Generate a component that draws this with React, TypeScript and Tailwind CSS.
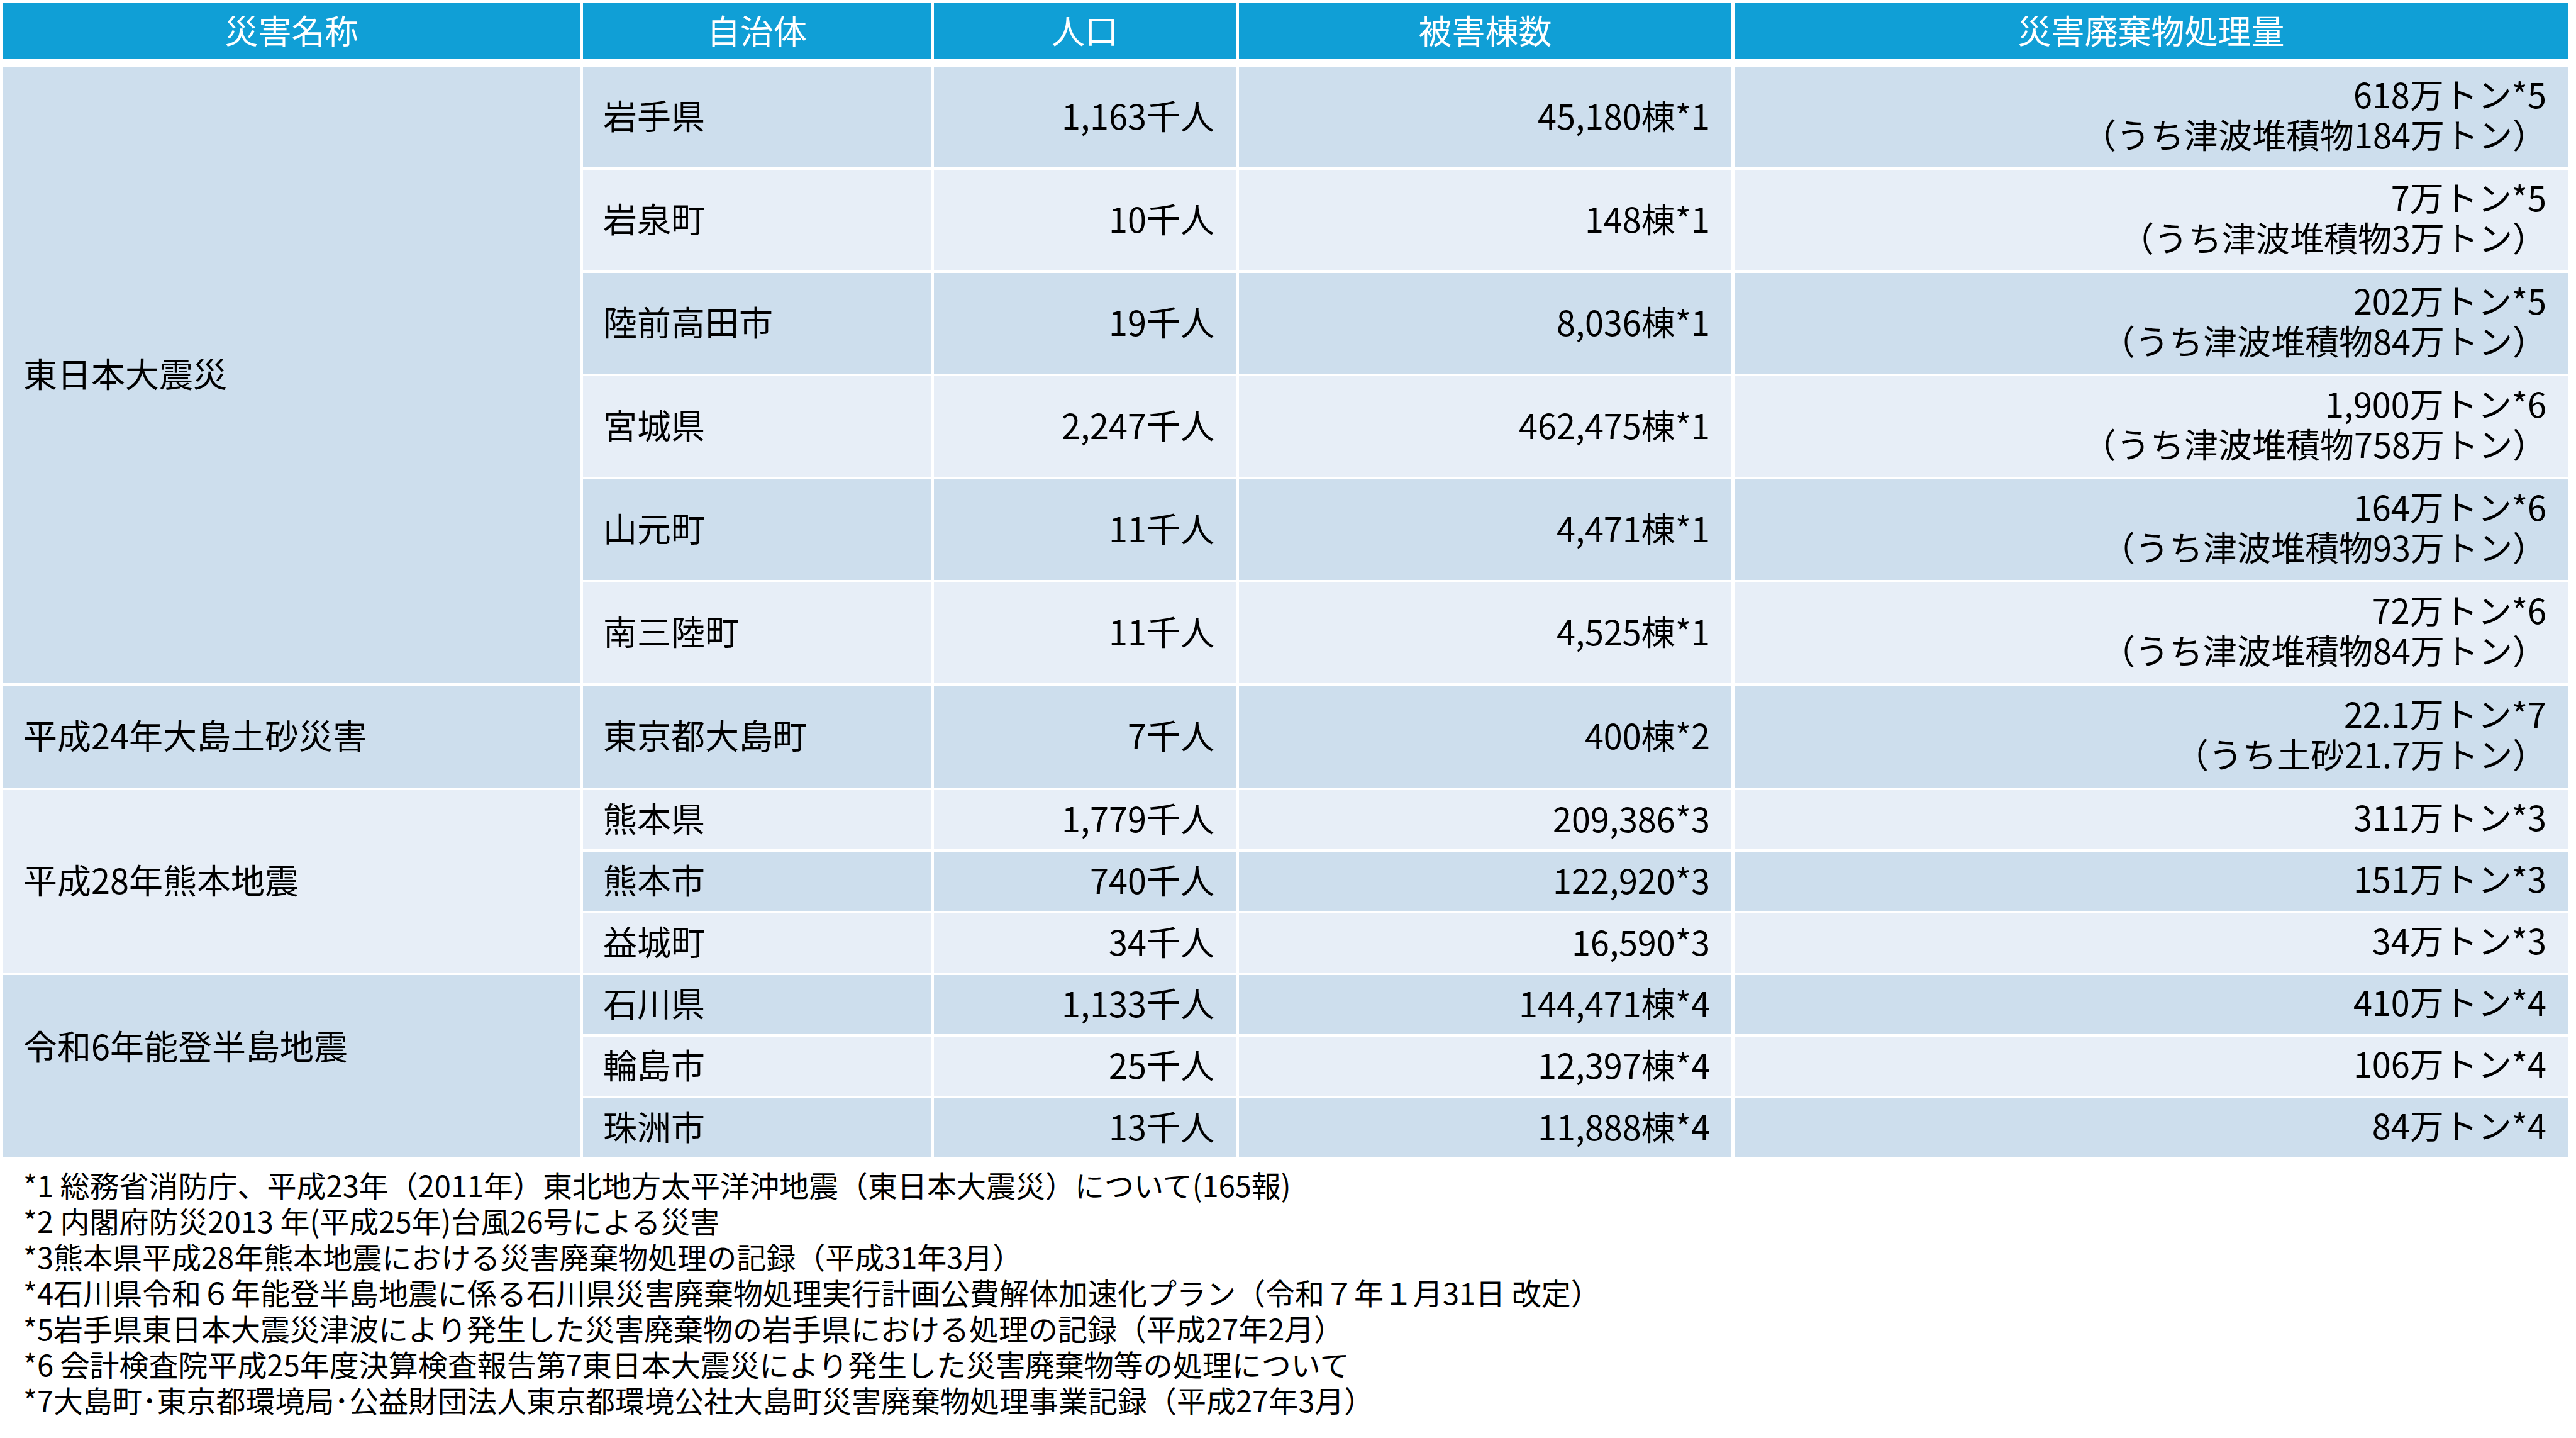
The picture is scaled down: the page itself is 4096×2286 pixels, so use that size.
import React from 'react';

type Row = {
  city: string;
  pop: string;
  damage: string;
  waste: string[];
  dark: boolean;
};

const rows: Row[] = [
  { city: '岩手県', pop: '1,163千人', damage: '45,180棟*1', waste: ['618万トン*5', '（うち津波堆積物184万トン）'], dark: true },
  { city: '岩泉町', pop: '10千人', damage: '148棟*1', waste: ['7万トン*5', '（うち津波堆積物3万トン）'], dark: false },
  { city: '陸前高田市', pop: '19千人', damage: '8,036棟*1', waste: ['202万トン*5', '（うち津波堆積物84万トン）'], dark: true },
  { city: '宮城県', pop: '2,247千人', damage: '462,475棟*1', waste: ['1,900万トン*6', '（うち津波堆積物758万トン）'], dark: false },
  { city: '山元町', pop: '11千人', damage: '4,471棟*1', waste: ['164万トン*6', '（うち津波堆積物93万トン）'], dark: true },
  { city: '南三陸町', pop: '11千人', damage: '4,525棟*1', waste: ['72万トン*6', '（うち津波堆積物84万トン）'], dark: false },
  { city: '東京都大島町', pop: '7千人', damage: '400棟*2', waste: ['22.1万トン*7', '（うち土砂21.7万トン）'], dark: true },
  { city: '熊本県', pop: '1,779千人', damage: '209,386*3', waste: ['311万トン*3'], dark: false },
  { city: '熊本市', pop: '740千人', damage: '122,920*3', waste: ['151万トン*3'], dark: true },
  { city: '益城町', pop: '34千人', damage: '16,590*3', waste: ['34万トン*3'], dark: false },
  { city: '石川県', pop: '1,133千人', damage: '144,471棟*4', waste: ['410万トン*4'], dark: true },
  { city: '輪島市', pop: '25千人', damage: '12,397棟*4', waste: ['106万トン*4'], dark: false },
  { city: '珠洲市', pop: '13千人', damage: '11,888棟*4', waste: ['84万トン*4'], dark: true },
];

const notes = [
  '*1 総務省消防庁、平成23年（2011年）東北地方太平洋沖地震（東日本大震災）について(165報)',
  '*2 内閣府防災2013 年(平成25年)台風26号による災害',
  '*3熊本県平成28年熊本地震における災害廃棄物処理の記録（平成31年3月）',
  '*4石川県令和６年能登半島地震に係る石川県災害廃棄物処理実行計画公費解体加速化プラン（令和７年１月31日 改定）',
  '*5岩手県東日本大震災津波により発生した災害廃棄物の岩手県における処理の記録（平成27年2月）',
  '*6 会計検査院平成25年度決算検査報告第7東日本大震災により発生した災害廃棄物等の処理について',
  '*7大島町･東京都環境局･公益財団法人東京都環境公社大島町災害廃棄物処理事業記録（平成27年3月）',
];

const dark = 'bg-[#cddeed]';
const light = 'bg-[#e7eef7]';

export default function App() {
  return (
    <div
      className="w-[4096px] h-[2286px] bg-white pl-[5px] pt-[5px] text-black"
      style={{ fontFamily: '"Noto Sans CJK JP", "Noto Sans", sans-serif' }}
    >
      {/* Header */}
      <div className="grid grid-cols-[917px_553px_480px_783px_1325px] gap-x-[5px] h-[88px] text-[53px] text-white">
        {['災害名称', '自治体', '人口', '被害棟数', '災害廃棄物処理量'].map((h) => (
          <div key={h} className="bg-[#109fd6] flex items-center justify-center pb-[3px]">
            {h}
          </div>
        ))}
      </div>

      {/* Body */}
      <div className="mt-[13px] grid grid-cols-[917px_553px_480px_783px_1325px] grid-rows-[160px_160px_160px_160px_160px_160px_162px_94px_94px_94px_94px_94px_94px] gap-x-[5px] gap-y-[4px] text-[54px] leading-[64px]">
        <div className={`${dark} row-start-1 row-span-6 col-start-1 flex items-center pl-[32px] pb-[6px]`}>
          東日本大震災
        </div>
        <div className={`${dark} row-start-7 row-span-1 col-start-1 flex items-center pl-[32px] pb-[6px]`}>
          平成24年大島土砂災害
        </div>
        <div className={`${light} row-start-8 row-span-3 col-start-1 flex items-center pl-[32px] pb-[6px]`}>
          平成28年熊本地震
        </div>
        <div className={`${dark} row-start-11 row-span-3 col-start-1 flex items-center pl-[32px] pb-[66px]`}>
          令和6年能登半島地震
        </div>

        {rows.map((r) => {
          const bg = r.dark ? dark : light;
          return (
            <React.Fragment key={r.city}>
              <div className={`${bg} col-start-2 flex items-center pl-[32px] pb-[7px]`}>{r.city}</div>
              <div className={`${bg} col-start-3 flex items-center justify-end pr-[34px] pb-[7px]`}>{r.pop}</div>
              <div className={`${bg} col-start-4 flex items-center justify-end pr-[34px] pb-[7px]`}>{r.damage}</div>
              <div className={`${bg} col-start-5 flex flex-col items-end justify-center pr-[34px] pb-[10px]`}>
                {r.waste.map((w) => (
                  <span key={w}>{w}</span>
                ))}
              </div>
            </React.Fragment>
          );
        })}
      </div>

      {/* Footnotes */}
      <div className="mt-[14px] pl-[32px] text-[47px] leading-[57px]">
        {notes.map((n) => (
          <div key={n}>{n}</div>
        ))}
      </div>
    </div>
  );
}
